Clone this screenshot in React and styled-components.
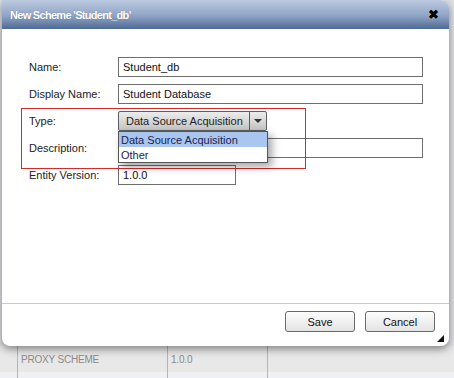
import React from "react";
import styled, { createGlobalStyle } from "styled-components";

const Global = createGlobalStyle`
  html, body { margin: 0; padding: 0; }
  body { font-family: "Liberation Sans", Arial, sans-serif; }
`;

const Desktop = styled.div`
  position: relative;
  width: 454px;
  height: 378px;
  overflow: hidden;
  background: #e2e2e6;
  display: flex;
  flex-direction: column;
  justify-content: flex-end;
`;

const BgRow = styled.div`
  display: grid;
  grid-template-columns: 17px 150px 100px 1fr;
  height: ${(p) => p.h}px;
  background: ${(p) => p.bg};
  font-size: 10px;
  color: #8a8a8a;
`;

const BgCell = styled.div`
  border-left: ${(p) => (p.line ? "1px solid #b4b4b4" : "none")};
  padding-left: 3px;
  display: flex;
  align-items: center;
  letter-spacing: -0.2px;
  white-space: nowrap;
`;

const Dialog = styled.div`
  position: absolute;
  left: 2px;
  top: 0;
  width: 447px;
  height: 346px;
  background: #fff;
  border-radius: 0 8px 8px 8px;
  box-shadow: 0 3px 8px rgba(0, 0, 0, 0.45);
  display: flex;
  flex-direction: column;
  overflow: hidden;
`;

const TitleBar = styled.div`
  height: 29px;
  flex: none;
  background: linear-gradient(#bccbe1, #8ea3c4 55%, #4f6a96);
  display: flex;
  align-items: center;
  justify-content: space-between;
  padding: 0 10px 0 8px;
`;

const Title = styled.div`
  color: #fff;
  font-weight: bold;
  font-size: 11px;
  letter-spacing: -0.7px;
  text-shadow: 0 0 1px rgba(0, 0, 0, 0.3);
`;

const Close = styled.div`
  color: #000;
  font-weight: bold;
  font-size: 13px;
  line-height: 1;
  text-shadow: 0 0 1px #fff;
`;

const Body = styled.div`
  flex: 1;
  padding: 28px 0 0 27px;
  display: grid;
  grid-template-columns: 89px auto;
  grid-auto-rows: 20px;
  row-gap: 7px;
  align-content: start;
`;

const Label = styled.div`
  font-size: 11px;
  color: #222;
  display: flex;
  align-items: center;
  white-space: nowrap;
`;

const Input = styled.div`
  width: ${(p) => p.w}px;
  height: 20px;
  box-sizing: border-box;
  border: 1px solid #6e6e6e;
  font-size: 11px;
  color: #111;
  padding-left: 4px;
  display: flex;
  align-items: center;
  white-space: nowrap;
`;

const Select = styled.div`
  width: 149px;
  height: 20px;
  box-sizing: border-box;
  border: 1px solid #5e5e5e;
  border-radius: 2px;
  background: linear-gradient(#ececec, #c4c4c4);
  display: flex;
  font-size: 11px;
  color: #222;
`;

const SelectText = styled.div`
  flex: 1;
  display: flex;
  align-items: center;
  padding-left: 7px;
  white-space: nowrap;
`;

const SelectArrow = styled.div`
  width: 16px;
  border-left: 1px solid #5e5e5e;
  display: flex;
  align-items: center;
  justify-content: center;
  &::after {
    content: "";
    border-left: 4px solid transparent;
    border-right: 4px solid transparent;
    border-top: 4px solid #333;
  }
`;

const Footer = styled.div`
  flex: none;
  height: 35px;
  border-top: 1px solid #c8c8c8;
  display: flex;
  justify-content: flex-end;
  align-items: flex-start;
  gap: 10px;
  padding: 7px 14px 0 0;
  position: relative;
`;

const Button = styled.div`
  width: 70px;
  height: 21px;
  box-sizing: border-box;
  border: 1px solid #6a6a6a;
  border-radius: 3px;
  background: linear-gradient(#fdfdfd, #e4e4e4);
  font-size: 11px;
  color: #111;
  display: flex;
  align-items: center;
  justify-content: center;
`;

const Grip = styled.div`
  position: absolute;
  right: 5px;
  bottom: 4px;
  width: 0;
  height: 0;
  border-left: 7px solid transparent;
  border-bottom: 7px solid #111;
`;

const DropList = styled.div`
  position: absolute;
  left: 118px;
  top: 131px;
  width: 150px;
  box-sizing: border-box;
  border: 1px solid #555;
  background: #fff;
  box-shadow: 4px 4px 8px rgba(0, 0, 0, 0.35);
`;

const DropItem = styled.div`
  height: 15px;
  display: flex;
  align-items: center;
  padding-left: 2px;
  font-size: 11px;
  color: #1b1b55;
  white-space: nowrap;
  background: ${(p) => (p.active ? "#a9c7ee" : "#fff")};
`;

const Highlight = styled.div`
  position: absolute;
  left: 21px;
  top: 108px;
  width: 285px;
  height: 61px;
  box-sizing: border-box;
  border: 1px solid #d42a2a;
`;

export default function App() {
  return (
    <>
      <Global />
      <Desktop>
        <BgRow h={26} bg="#e8e8e8">
          <BgCell />
          <BgCell line>PROXY SCHEME</BgCell>
          <BgCell line>1.0.0</BgCell>
          <BgCell line />
        </BgRow>
        <BgRow h={6} bg="#eef0f4">
          <BgCell />
          <BgCell line />
          <BgCell line />
          <BgCell line />
        </BgRow>
        <Dialog>
          <TitleBar>
            <Title>New Scheme 'Student_db'</Title>
            <Close>✖</Close>
          </TitleBar>
          <Body>
            <Label>Name:</Label>
            <Input w={305}>Student_db</Input>
            <Label>Display Name:</Label>
            <Input w={305}>Student Database</Input>
            <Label>Type:</Label>
            <Select>
              <SelectText>Data Source Acquisition</SelectText>
              <SelectArrow />
            </Select>
            <Label>Description:</Label>
            <Input w={305} />
            <Label>Entity Version:</Label>
            <Input w={118}>1.0.0</Input>
          </Body>
          <Footer>
            <Button>Save</Button>
            <Button>Cancel</Button>
            <Grip />
          </Footer>
        </Dialog>
        <Highlight />
        <DropList>
          <DropItem active>Data Source Acquisition</DropItem>
          <DropItem>Other</DropItem>
        </DropList>
      </Desktop>
    </>
  );
}
